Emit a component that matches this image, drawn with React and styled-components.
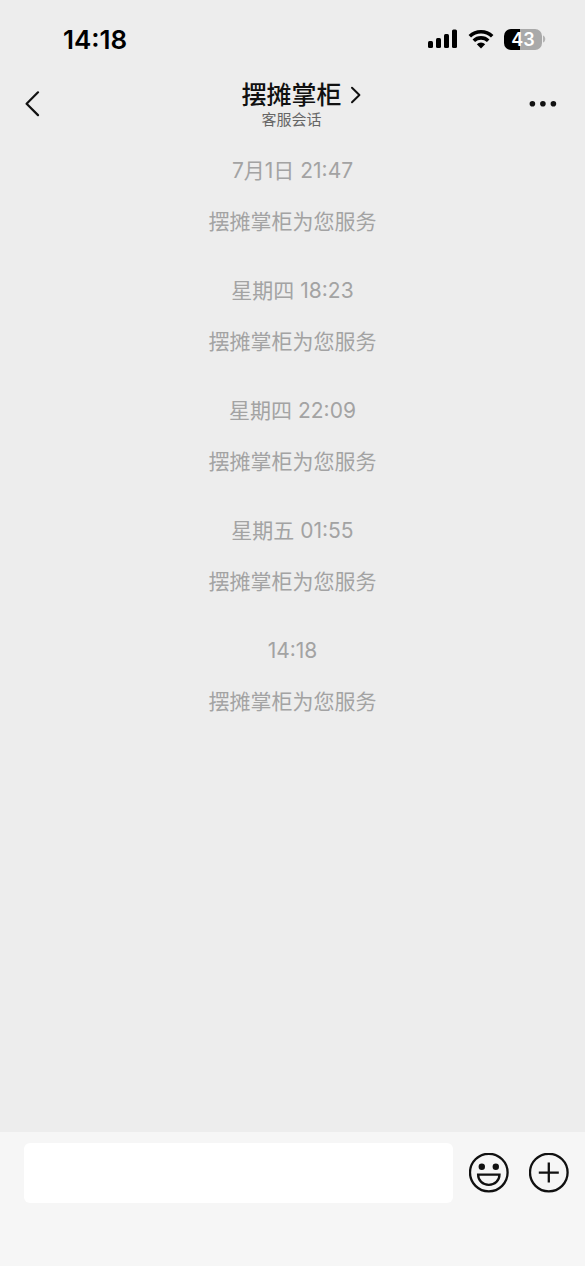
import React, { useState } from "react";
import styled, { createGlobalStyle } from "styled-components";

const messages = [
  { time: "7月1日 21:47", text: "摆摊掌柜为您服务" },
  { time: "星期四 18:23", text: "摆摊掌柜为您服务" },
  { time: "星期四 22:09", text: "摆摊掌柜为您服务" },
  { time: "星期五 01:55", text: "摆摊掌柜为您服务" },
  { time: "14:18", text: "摆摊掌柜为您服务" },
];

function StatusBar() {
  return (
    <Status>
      <Clock>14:18</Clock>
      <Indicators>
        <svg width="30" height="20" viewBox="0 0 30 20" aria-hidden="true">
          <rect x="0" y="12" width="5" height="7" rx="1.5" />
          <rect x="8" y="9" width="5" height="10" rx="1.5" />
          <rect x="16" y="5" width="5" height="14" rx="1.5" />
          <rect x="24" y="0.5" width="5" height="18.5" rx="1.5" />
        </svg>
        <svg width="26" height="20" viewBox="0 0 26 20" aria-hidden="true">
          <g fill="none" stroke="#000" strokeWidth="3.6">
            <path d="M1.8 7.2a16.2 16.2 0 0 1 22.4 0" />
            <path d="M5.8 11.8a10.3 10.3 0 0 1 14.4 0" />
          </g>
          <path d="M13 19.4l-4.2-4.2a5.9 5.9 0 0 1 8.4 0z" />
        </svg>
        <Battery>
          <Charge>43</Charge>
          <svg width="3" height="8" viewBox="0 0 3 8" aria-hidden="true">
            <path d="M0 0.5c3 1 3 6 0 7z" fill="#b4b4b4" />
          </svg>
        </Battery>
      </Indicators>
    </Status>
  );
}

function Header() {
  return (
    <Nav>
      <NavSide>
        <IconButton type="button" aria-label="返回">
          <svg width="16" height="26" viewBox="0 0 16 26" fill="none" stroke="#111" strokeWidth="2.2" strokeLinecap="round">
            <path d="M14 1.3L2.6 12.7L14 24.1" strokeLinejoin="round" />
          </svg>
        </IconButton>
      </NavSide>
      <Heading>
        <Title href="#profile">
          摆摊掌柜
          <svg width="12" height="18" viewBox="0 0 12 18" fill="none" stroke="#111" strokeWidth="2" strokeLinecap="round">
            <path d="M2 1.8L9.4 9L2 16.2" strokeLinejoin="round" />
          </svg>
        </Title>
        <Subtitle>客服会话</Subtitle>
      </Heading>
      <NavSide $end>
        <IconButton type="button" aria-label="更多">
          <svg width="28" height="8" viewBox="0 0 28 8" fill="#111">
            <circle cx="3.4" cy="3.7" r="2.8" />
            <circle cx="13.9" cy="3.7" r="2.8" />
            <circle cx="24.4" cy="3.7" r="2.8" />
          </svg>
        </IconButton>
      </NavSide>
    </Nav>
  );
}

function InputBar() {
  const [value, setValue] = useState("");

  return (
    <Footer>
      <TextInput
        type="text"
        aria-label="消息"
        value={value}
        onChange={(e) => setValue(e.target.value)}
      />
      <Tools>
        <IconButton type="button" aria-label="表情">
          <svg width="40" height="40" viewBox="0 0 40 40" fill="none" stroke="#111" strokeWidth="2.3">
            <circle cx="19.8" cy="19.6" r="18.8" />
            <circle cx="12.8" cy="13.8" r="3.2" fill="#111" stroke="none" />
            <circle cx="26.8" cy="13.8" r="3.2" fill="#111" stroke="none" />
            <path d="M9.1 21.6h21.4c0 6-4.6 10.2-10.7 10.2S9.1 27.6 9.1 21.6z" />
          </svg>
        </IconButton>
        <IconButton type="button" aria-label="添加">
          <svg width="40" height="40" viewBox="0 0 40 40" fill="none" stroke="#111" strokeWidth="2.3">
            <circle cx="19.8" cy="19.6" r="18.8" />
            <path d="M19.8 9.6v20M9.8 19.6h20" />
          </svg>
        </IconButton>
      </Tools>
    </Footer>
  );
}

export default function App() {
  return (
    <>
      <GlobalStyle />
      <Page>
        <StatusBar />
        <Header />
        <Messages>
          {messages.map(({ time, text }) => (
            <Message key={time}>
              <Line>{time}</Line>
              <Line>{text}</Line>
            </Message>
          ))}
        </Messages>
        <InputBar />
      </Page>
    </>
  );
}

const GlobalStyle = createGlobalStyle`
  * {
    box-sizing: border-box;
  }

  body {
    margin: 0;
    background: #ededed;
    color: #111;
    font-family: Inter, "Noto Sans CJK SC", sans-serif;
  }

  svg {
    display: block;
  }
`;

const Page = styled.div`
  min-height: 100vh;
  display: flex;
  flex-direction: column;
`;

const Status = styled.div`
  height: 78px;
  padding: 0 39px 0 63px;
  display: flex;
  align-items: center;
  justify-content: space-between;
  color: #000;
`;

const Clock = styled.span`
  font-size: 26px;
  font-weight: 600;
`;

const Indicators = styled.div`
  display: flex;
  align-items: center;
  gap: 10px;
`;

const Battery = styled.div`
  display: flex;
  align-items: center;
  gap: 1px;
`;

const Charge = styled.span`
  width: 38px;
  height: 21px;
  border-radius: 7px;
  background: linear-gradient(90deg, #000 43%, #a9a9a9 43%);
  color: #fff;
  font-size: 18px;
  font-weight: 600;
  line-height: 21px;
  text-align: center;
`;

const Nav = styled.header`
  height: 52px;
  padding: 0 28px 0 24px;
  display: flex;
  align-items: center;
`;

const NavSide = styled.div`
  flex: 1;
  display: flex;
  justify-content: ${({ $end }) => ($end ? "flex-end" : "flex-start")};
`;

const IconButton = styled.button`
  flex: none;
  padding: 0;
  border: none;
  background: transparent;
  cursor: pointer;
`;

const Heading = styled.div`
  padding: 2px 0 0 2px;
  display: flex;
  flex-direction: column;
  align-items: center;
`;

const Title = styled.a`
  padding-left: 20px;
  display: flex;
  align-items: center;
  gap: 8px;
  color: #111;
  font-size: 25px;
  font-weight: 500;
  line-height: 30px;
  text-decoration: none;
`;

const Subtitle = styled.span`
  color: #666;
  font-size: 15px;
  line-height: 20px;
`;

const Messages = styled.main`
  flex: 1;
  padding: 26px 16px;
  display: flex;
  flex-direction: column;
  gap: 39px;
`;

const Message = styled.section`
  display: flex;
  flex-direction: column;
  align-items: center;
  gap: 21px;
`;

const Line = styled.p`
  margin: 0;
  color: #a3a3a3;
  font-size: 21px;
  line-height: 30px;
`;

const Footer = styled.footer`
  height: 134px;
  padding: 11px 16px 0 24px;
  display: flex;
  align-items: flex-start;
  gap: 16px;
  background: #f6f6f6;
`;

const TextInput = styled.input`
  flex: 1;
  min-width: 0;
  height: 60px;
  padding: 0 16px;
  border: none;
  border-radius: 6px;
  background: #fff;
  font: inherit;
  font-size: 21px;
  outline: none;
`;

const Tools = styled.div`
  height: 60px;
  display: flex;
  align-items: center;
  gap: 20px;
`;
